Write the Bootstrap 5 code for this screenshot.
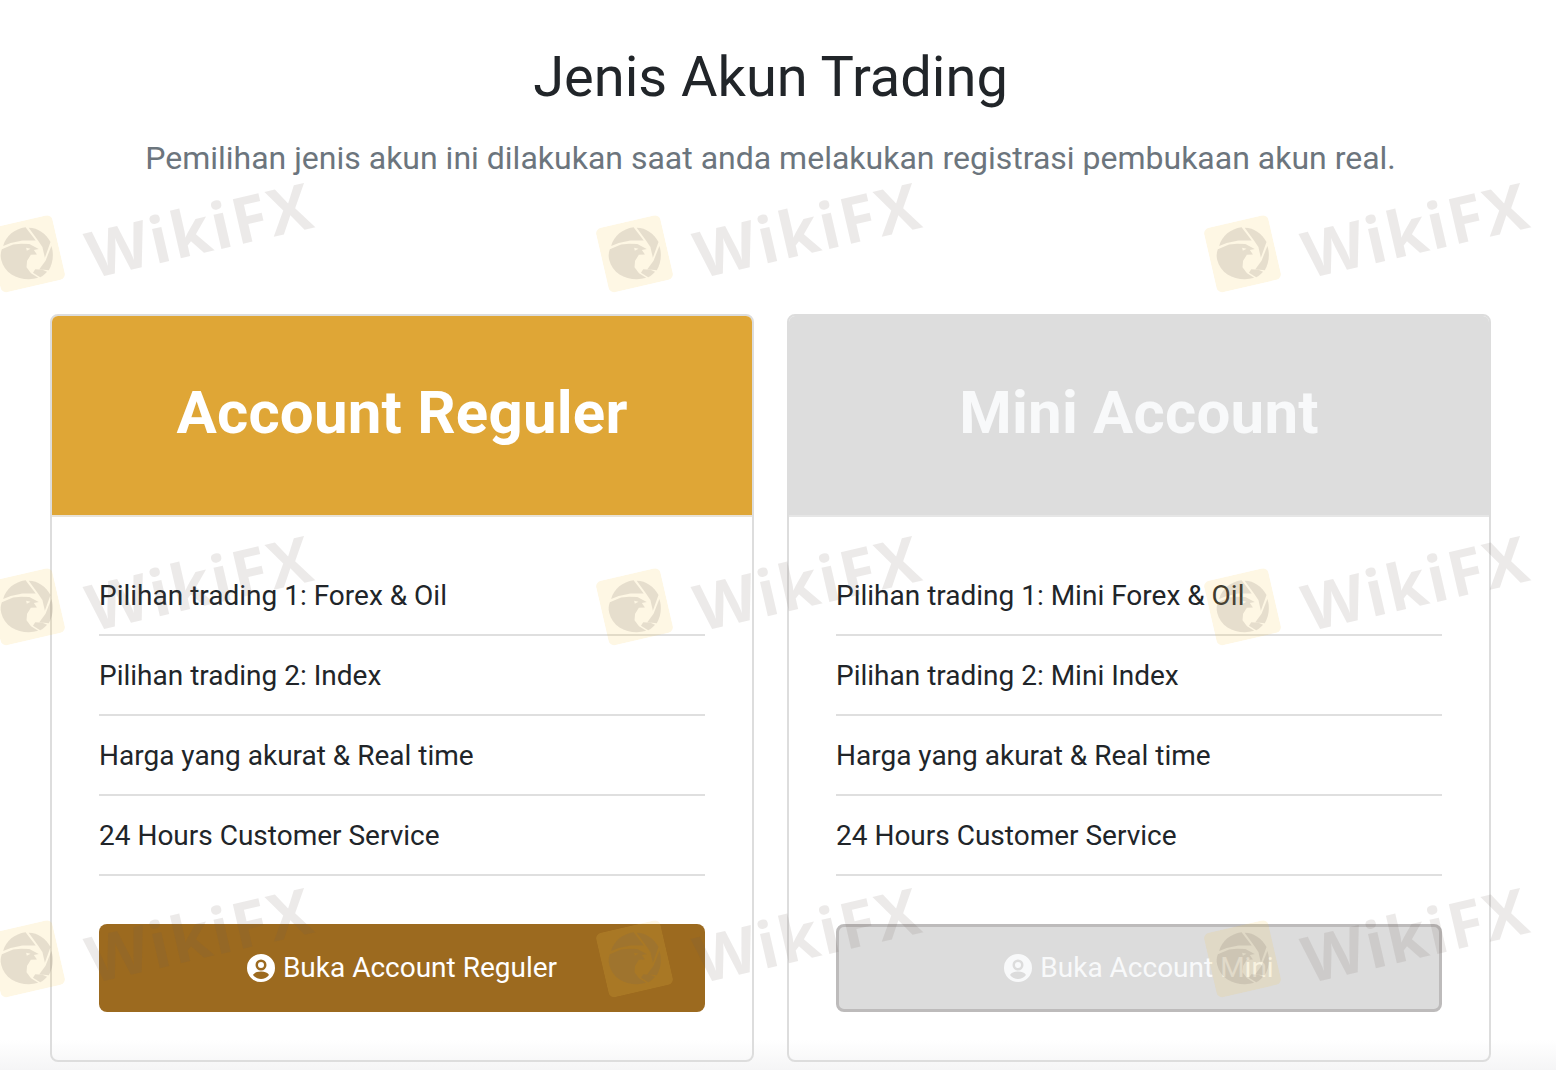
<!DOCTYPE html>
<html lang="id">

<head>
    <meta charset="UTF-8">
    <meta name="viewport" content="width=device-width, initial-scale=1.0">
    <title>Jenis Akun Trading</title>
    <link href="https://cdn.jsdelivr.net/npm/bootstrap@5.3.0/dist/css/bootstrap.min.css" rel="stylesheet">
    <style>
        html, body {
            height: 1070px;
            overflow: hidden;
        }

        body {
            font-family: Roboto, "Liberation Sans", sans-serif;
            color: #212529;
            background: linear-gradient(to bottom, #fff 1040px, #f5f5f6 1070px);
            position: relative;
        }

        .page-wrap {
            padding: 0 65px 0 50px;
        }

        .page-title {
            font-size: 56px;
            font-weight: 400;
            line-height: 67px;
            margin: 44px 0 0;
        }

        .page-sub {
            font-size: 32px;
            line-height: 48px;
            color: #6c757d;
            margin: 23px 0 0;
            font-weight: 400;
        }

        .plans {
            margin-top: 132px;
            gap: 33px;
        }

        .plan-card {
            flex: 1 1 0;
            height: 748px;
            border: 2px solid #ddd;
            border-radius: 8px;
            background: transparent;
        }

        .plan-head {
            height: 201px;
            padding: 0 0 6px;
            border-radius: 6px 6px 0 0 !important;
            border: 0;
            border-bottom: 2px solid #e9e3d8;
            display: flex;
            align-items: center;
            justify-content: center;
            color: #fff;
        }

        .plan-head h2 {
            font-size: 60px;
            font-weight: 700;
            line-height: 72px;
            margin: 0;
            letter-spacing: .2px;
        }

        .head-gold {
            background: #dfa636;
        }

        .head-grey {
            background: #dddddd;
            border-bottom-color: #e6e6e6;
        }

        .head-grey h2 {
            color: #f8f9fa;
        }

        .plan-body {
            padding: 39px 47px 48px;
            display: flex;
            flex-direction: column;
        }

        .plan-list {
            background: transparent;
        }

        .plan-list .list-group-item {
            height: 80px;
            padding: 1px 0 0;
            display: flex;
            align-items: center;
            background: transparent;
            border-color: #dfdfdf;
            border-width: 0 0 2px !important;
            border-style: solid;
            font-size: 28px;
            color: #212529;
        }

        .plan-btn {
            height: 88px;
            margin-top: 48px;
            font-size: 28px;
            border-radius: 8px;
            display: flex;
            align-items: center;
            justify-content: center;
            gap: 8px;
        }

        .btn-gold,
        .btn-gold:hover {
            background: #9c6a1f;
            border: 0;
            color: #fff;
        }

        .btn-grey,
        .btn-grey:hover {
            background: #dcdcdc;
            border: 3px solid #bdbbbb;
            color: #f8f9fa;
        }

        .user-ico {
            width: 28px;
            height: 28px;
            fill: currentColor;
        }

        .wm-layer {
            position: absolute;
            inset: 0;
            pointer-events: none;
            display: grid;
            grid-template-columns: repeat(3, 608px);
            grid-auto-rows: 352.5px;
            padding-top: 158px;
            overflow: hidden;
        }

        .wm-item {
            display: flex;
            align-items: center;
            gap: 26px;
            height: 130px;
            width: 340px;
            margin-left: -10px;
            transform: rotate(-13deg);
        }

        .wm-logo {
            width: 66px;
            height: 66px;
            flex: none;
        }

        .wm-text {
            font-family: "Open Sans", sans-serif;
            font-weight: 700;
            font-size: 64px;
            line-height: 1;
            letter-spacing: 2px;
            margin-top: 30px;
            color: rgba(110, 90, 85, .13);
        }
    </style>
</head>

<body>
    <div class="page-wrap">
        <h1 class="page-title text-center">Jenis Akun Trading</h1>
        <p class="page-sub text-center">Pemilihan jenis akun ini dilakukan saat anda melakukan registrasi pembukaan akun real.</p>

        <div class="plans d-flex">
            <div class="card plan-card">
                <div class="card-header plan-head head-gold">
                    <h2>Account Reguler</h2>
                </div>
                <div class="plan-body">
                    <ul class="list-group list-group-flush plan-list">
                        <li class="list-group-item">Pilihan trading 1: Forex &amp; Oil</li>
                        <li class="list-group-item">Pilihan trading 2: Index</li>
                        <li class="list-group-item">Harga yang akurat &amp; Real time</li>
                        <li class="list-group-item">24 Hours Customer Service</li>
                    </ul>
                    <a href="#" class="btn plan-btn btn-gold">
                        <svg class="user-ico" viewBox="0 0 28 28"><use href="#ico-user"/></svg>
                        Buka Account Reguler
                    </a>
                </div>
            </div>

            <div class="card plan-card">
                <div class="card-header plan-head head-grey">
                    <h2>Mini Account</h2>
                </div>
                <div class="plan-body">
                    <ul class="list-group list-group-flush plan-list">
                        <li class="list-group-item">Pilihan trading 1: Mini Forex &amp; Oil</li>
                        <li class="list-group-item">Pilihan trading 2: Mini Index</li>
                        <li class="list-group-item">Harga yang akurat &amp; Real time</li>
                        <li class="list-group-item">24 Hours Customer Service</li>
                    </ul>
                    <a href="#" class="btn plan-btn btn-grey">
                        <svg class="user-ico" viewBox="0 0 28 28"><use href="#ico-user"/></svg>
                        Buka Account Mini
                    </a>
                </div>
            </div>
        </div>
    </div>

    <svg width="0" height="0" class="position-absolute">
        <symbol id="ico-user" viewBox="0 0 28 28">
            <path fill-rule="evenodd" d="M14 0a14 14 0 1 1 0 28a14 14 0 1 1 0-28zM14 5.5a5.5 5.500 0 1 0 0 11a5.500 5.500 0 1 0 0-11zM14 8a3 3 0 1 1 0 6a3 3 0 1 1 0-6zM14 17.500c-4 0-7 1.500-8 3.500 2 2.500 5 4 8 4s6-1.500 8-4c-1-2-4-3.500-8-3.500z"/>
        </symbol>
        <symbol id="wm-eagle" viewBox="0 0 66 66">
            <rect width="66" height="66" rx="6" fill="#f7c948" fill-opacity=".15"/>
            <g fill="#6e625c" fill-opacity=".17">
                <!-- eagle head and body, left side of the disc -->
                <path fill-rule="evenodd" d="M10 23 22 21 30 22 38 24 46 31 41 31 43 36 37 35 32 40 30 46 33 53 39 59C24 60 7 50 7 33 7 29 8 26 10 23zM34 27 38 29 34 30z"/>
                <!-- shutter blades around it -->
                <path d="M12 20C17 11 27 6 38 7L45 22 32 19 20 19z"/>
                <path d="M41 8C50 10 57 18 59 27L50 41 50 30 47 22z"/>
                <path d="M59 31C60 40 56 49 51 54L42 51 50 44z"/>
                <path d="M49 55C46 57 44 58 41 59L35 53 38 50 45 52z"/>
            </g>
        </symbol>
    </svg>

    <!-- watermark over the whole shot -->
    <div class="wm-layer">
        <div class="wm-item"><svg class="wm-logo"><use href="#wm-eagle"/></svg><span class="wm-text">WikiFX</span></div>
        <div class="wm-item"><svg class="wm-logo"><use href="#wm-eagle"/></svg><span class="wm-text">WikiFX</span></div>
        <div class="wm-item"><svg class="wm-logo"><use href="#wm-eagle"/></svg><span class="wm-text">WikiFX</span></div>
        <div class="wm-item"><svg class="wm-logo"><use href="#wm-eagle"/></svg><span class="wm-text">WikiFX</span></div>
        <div class="wm-item"><svg class="wm-logo"><use href="#wm-eagle"/></svg><span class="wm-text">WikiFX</span></div>
        <div class="wm-item"><svg class="wm-logo"><use href="#wm-eagle"/></svg><span class="wm-text">WikiFX</span></div>
        <div class="wm-item"><svg class="wm-logo"><use href="#wm-eagle"/></svg><span class="wm-text">WikiFX</span></div>
        <div class="wm-item"><svg class="wm-logo"><use href="#wm-eagle"/></svg><span class="wm-text">WikiFX</span></div>
        <div class="wm-item"><svg class="wm-logo"><use href="#wm-eagle"/></svg><span class="wm-text">WikiFX</span></div>
    </div>

    <script src="https://cdn.jsdelivr.net/npm/bootstrap@5.3.0/dist/js/bootstrap.bundle.min.js"></script>
</body>

</html>
